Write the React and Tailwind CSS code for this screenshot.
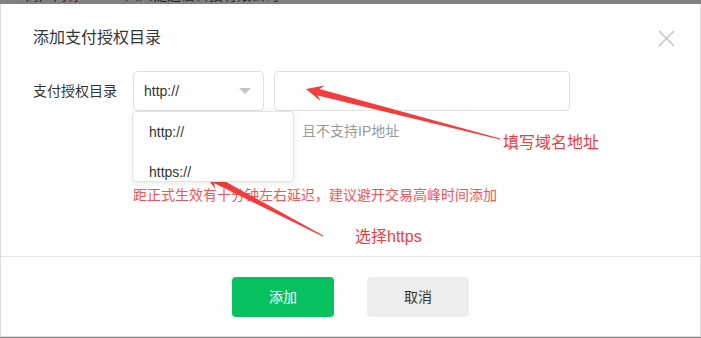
import React from 'react';

const font = { fontFamily: '"Liberation Sans", "Noto Sans CJK SC", sans-serif' };

function Arrows() {
  return (
    <svg className="absolute left-0 top-0 pointer-events-none" width="701" height="338">
      <polygon
        fill="#f53c3c"
        points="306,89 324.5,85.5 319.5,88.9 500.1,138.5 499.9,139.5 317.7,95.6 320.5,101"
      />
      <polygon
        fill="#f53c3c"
        points="204,174 222.8,174.8 217.2,176.9 323.2,235.6 322.8,236.4 213.9,183.1 215.4,189"
      />
    </svg>
  );
}

export default function App() {
  return (
    <div className="relative w-[701px] h-[338px] bg-[#808080] overflow-hidden" style={font}>
      {/** MASKED PAGE BEHIND */}
      <div className="h-[4px] overflow-hidden">
        <div className="flex -mt-[13px] text-[14px] leading-[16px] text-[#262626]">
          <span className="ml-[25px]">商户简称</span>
          <span className="ml-[44px]">四川泛之信科技有限公司</span>
        </div>
      </div>

      {/** DIALOG */}
      <div className="h-[333px] bg-white border-x border-b border-[#dcdcdc] flex flex-col">
        {/** HEADER */}
        <div className="flex items-center justify-between pl-[32px] pr-[25px] pt-[22px]">
          <h3 className="text-[16px] leading-[24px] text-[#353535]">添加支付授权目录</h3>
          <svg width="17" height="17" viewBox="0 0 17 17">
            <path d="M1 1 L16 16 M16 1 L1 16" stroke="#c8c8c8" strokeWidth="1.6" fill="none" />
          </svg>
        </div>

        {/** FORM */}
        <div className="flex-1 pl-[32px] pt-[21px]">
          <div className="flex items-center">
            <span className="w-[100px] text-[14px] text-[#353535]">支付授权目录</span>
            <div className="relative">
              <div className="w-[131px] h-[40px] border border-[#e0e0e0] rounded-[4px] flex items-center justify-between pl-[10px] pr-[12px]">
                <span className="text-[14px] text-[#353535]">http://</span>
                <span className="w-0 h-0 border-x-[6px] border-x-transparent border-t-[6px] border-t-[#c4c4c4]" />
              </div>
              {/** DROPDOWN */}
              <div className="absolute -left-[1px] top-[40px] z-10 w-[162px] h-[71px] overflow-hidden bg-white border border-[#e3e3e3] rounded-[4px] shadow-[0_2px_6px_rgba(0,0,0,0.08)]">
                <div className="h-[40px] flex items-center pl-[16px] text-[14px] text-[#353535]">http://</div>
                <div className="h-[40px] flex items-center pl-[16px] text-[14px] text-[#353535]">https://</div>
              </div>
            </div>
            <div className="ml-[10px] w-[296px] h-[40px] border border-[#e0e0e0] rounded-[4px]" />
          </div>

          <p className="ml-[101px] mt-[10px] text-[14px] leading-[20px] text-[#9a9a9a]">
            授权目录需填写域名格式，且不支持IP地址
          </p>
          <p className="ml-[100px] mt-[44px] text-[14px] leading-[20px] text-[#f45454]">
            距正式生效有十分钟左右延迟，建议避开交易高峰时间添加
          </p>
        </div>

        {/** FOOTER */}
        <div className="border-t border-[#e5e5e5] flex justify-center gap-[33px] pt-[20px] pb-[19px]">
          <button className="w-[102px] h-[40px] rounded-[4px] bg-[#07c160] text-white text-[14px]">添加</button>
          <button className="w-[102px] h-[40px] rounded-[4px] bg-[#ededed] text-[#353535] text-[14px]">取消</button>
        </div>
      </div>

      {/** ANNOTATIONS */}
      <Arrows />
      <span className="absolute left-[503px] top-[132px] text-[16px] leading-[22px] text-[#f33b3b]">填写域名地址</span>
      <span className="absolute left-[355px] top-[226px] text-[16px] leading-[22px] text-[#f33b3b]">选择https</span>
    </div>
  );
}
